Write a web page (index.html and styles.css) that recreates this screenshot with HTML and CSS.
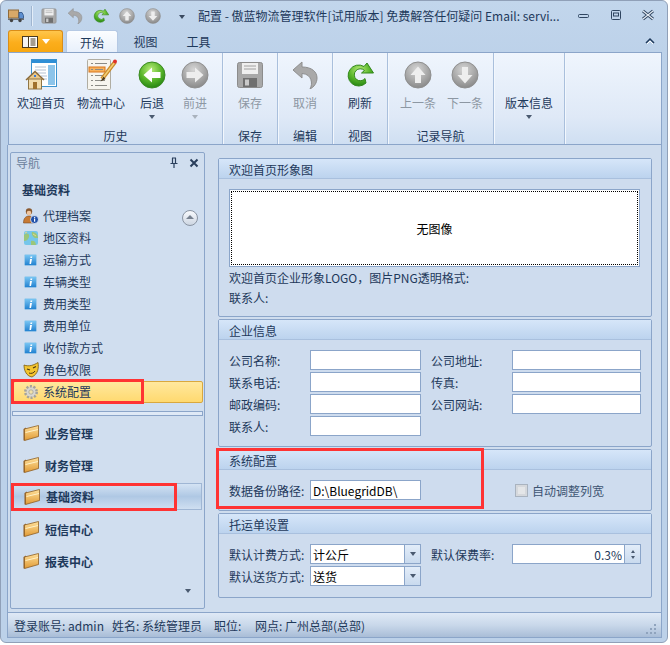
FILE: index.html
```html
<!DOCTYPE html>
<html lang="zh-CN">
<head>
  <meta charset="UTF-8" />
  <meta name="viewport" content="width=device-width, initial-scale=1.0" />
  <title>配置</title>
  <link rel="stylesheet" href="styles.css">
</head>
<body>
  <!-- 图标 -->
  <svg class="defs" aria-hidden="true">
    <defs>
      <radialGradient id="green" cx="45%" cy="30%" r="75%">
        <stop offset="0" stop-color="#b9ec7a"/><stop offset="0.55" stop-color="#58b52a"/><stop offset="1" stop-color="#1f7f10"/>
      </radialGradient>
      <radialGradient id="gray" cx="45%" cy="30%" r="75%">
        <stop offset="0" stop-color="#d6d6d6"/><stop offset="0.6" stop-color="#a6a6a6"/><stop offset="1" stop-color="#848484"/>
      </radialGradient>
      <linearGradient id="folder" x1="0" y1="0" x2="0" y2="1">
        <stop offset="0" stop-color="#ffe09a"/><stop offset="1" stop-color="#e09a35"/>
      </linearGradient>
      <linearGradient id="infoBlue" x1="0" y1="0" x2="0" y2="1">
        <stop offset="0" stop-color="#7cc8f4"/><stop offset="1" stop-color="#1f80d0"/>
      </linearGradient>
      <symbol id="i-home" viewBox="0 0 32 32">
        <rect x="6.500" y="0.500" width="25" height="27" fill="#fff" stroke="#3b93cf"/>
        <rect x="7" y="1" width="24" height="3" fill="#2f8fd6"/>
        <rect x="23" y="6" width="7" height="20" fill="#8cc4ea"/>
        <path d="M10 8h11M10 11h11M10 14h11M22 17h-6M22 20h-4" stroke="#b4c2d2" stroke-width="1.200"/>
        <path d="M1 21L10 12.500L19 21" fill="#e8c88a" stroke="#8a6a3a" stroke-width="1.500"/>
        <rect x="3.500" y="20" width="13" height="10" fill="#f2dcae" stroke="#8f7545"/>
        <rect x="8" y="23" width="4" height="7" fill="#a0702c"/>
        <rect x="9" y="16" width="2" height="2" fill="#3a7bd5"/>
      </symbol>
      <symbol id="i-center" viewBox="0 0 32 32">
        <rect x="2.500" y="0.500" width="23" height="30" rx="1" fill="#f7f5ee" stroke="#b0ada2"/>
        <rect x="4" y="8" width="16" height="5" fill="#f7b15b" stroke="#d9761c"/>
        <path d="M6 4.500h2M10 4.500h12M6 10.500h2M10 10.500h8M6 16.500h2M10 16.500h12M6 21.500h2M10 21.500h10M6 26.500h2M10 26.500h12" stroke="#8b8b85" stroke-width="1.200"/>
        <path d="M30 3L17 20" stroke="#c98a2a" stroke-width="4"/>
        <path d="M30 3L17 20" stroke="#f5cf75" stroke-width="1.500"/>
        <path d="M18.500 17.500L15.500 22.500L20.500 20Z" fill="#4a3a20"/>
        <circle cx="30" cy="2.500" r="2" fill="#e0312a"/>
      </symbol>
      <symbol id="i-back-green" viewBox="0 0 28 28">
        <circle cx="14" cy="14" r="13" fill="url(#green)" stroke="#3b8a22"/>
        <path d="M5.500 14L14 6.500V11H22.500V17H14V21.500Z" fill="#fff"/>
      </symbol>
      <symbol id="i-fwd-gray" viewBox="0 0 28 28">
        <circle cx="14" cy="14" r="13" fill="url(#gray)" stroke="#8f8f8f"/>
        <path d="M22.500 14L14 6.500V11H5.500V17H14V21.500Z" fill="#eee"/>
      </symbol>
      <symbol id="i-up-gray" viewBox="0 0 28 28">
        <circle cx="14" cy="14" r="13" fill="url(#gray)" stroke="#8f8f8f"/>
        <path d="M14 5.500L21.500 14H17V22H11V14H6.500Z" fill="#eee"/>
      </symbol>
      <symbol id="i-down-gray" viewBox="0 0 28 28">
        <circle cx="14" cy="14" r="13" fill="url(#gray)" stroke="#8f8f8f"/>
        <path d="M14 22.500L21.500 14H17V6H11V14H6.500Z" fill="#eee"/>
      </symbol>
      <symbol id="i-save" viewBox="0 0 28 28">
        <rect x="1.500" y="1.500" width="25" height="25" rx="2" fill="#a8a8a8" stroke="#8c8c8c"/>
        <rect x="6" y="2" width="16" height="11" fill="#efefef"/>
        <path d="M8 5h12M8 8h12" stroke="#a0a0a0"/>
        <rect x="7" y="17" width="14" height="9" fill="#6f6f6f"/>
        <rect x="9" y="18.500" width="4" height="6" fill="#c9c9c9"/>
      </symbol>
      <symbol id="i-undo" viewBox="0 0 26 28">
        <path d="M1 9L10 1V6C20 6 25 11 25 17C25 22 22 26 18 28C21 23 20 13 10 12.500V17Z" fill="#a9a9a9" stroke="#8e8e8e"/>
      </symbol>
      <symbol id="i-refresh" viewBox="0 0 28 28">
        <path d="M20 22A10.500 10.500 0 1 1 18 5.500L21 2L27.500 12H15.500L18.500 9.500A6 6 0 1 0 19 17.500Z" fill="url(#green)" stroke="#33881d"/>
      </symbol>
      <symbol id="i-truck" viewBox="0 0 16 14">
        <rect x="0.500" y="1.500" width="10" height="8" fill="#d8a868" stroke="#8f6a3a"/>
        <path d="M11 4h3l1.500 3v3H11Z" fill="#5d8fd0" stroke="#3d6294"/>
        <rect x="0" y="10" width="16" height="1.500" fill="#6f6f6f"/>
        <circle cx="3.500" cy="12" r="1.700" fill="#444"/><circle cx="12" cy="12" r="1.700" fill="#444"/>
      </symbol>
      <symbol id="i-agent" viewBox="0 0 16 16">
        <circle cx="6" cy="3.500" r="3.200" fill="#8a5a30"/>
        <circle cx="6" cy="5" r="2.300" fill="#f0c6a0"/>
        <path d="M0.500 15C0.500 10 3 8 6 8S11.500 10 11.500 15Z" fill="#c77a34" stroke="#7a4a22" stroke-width="0.600"/>
        <circle cx="11.500" cy="11.500" r="4" fill="#1f4fa8" stroke="#fff" stroke-width="0.700"/>
        <rect x="11" y="10.500" width="1.200" height="3.200" fill="#fff"/><rect x="11" y="8.800" width="1.200" height="1.100" fill="#fff"/>
      </symbol>
      <symbol id="i-map" viewBox="0 0 16 16">
        <rect x="1" y="1" width="14" height="14" rx="2" fill="#76c6ea"/>
        <path d="M1 5C4 2 7 4 6 7S3 11 1 11ZM9 2C12 2 15 4 15 8L12 8C10 7 8 4 9 2ZM8 11C10 10 13 11 13 15H8Z" fill="#9bc67a"/>
        <path d="M2 3l2-1M10 4l3 2" stroke="#e8d98a"/>
      </symbol>
      <symbol id="i-info" viewBox="0 0 16 16">
        <rect x="1.500" y="2.500" width="12" height="11" rx="1" fill="url(#infoBlue)" stroke="#a9cfe9" stroke-width="0.600"/>
        <path d="M7 7h2L8 12H6.500ZM7.500 4.500h1.800L9 6H7.300Z" fill="#fff"/>
      </symbol>
      <symbol id="i-mask" viewBox="0 0 16 16">
        <path d="M1 3C6 5 11 3 15 0.500C16 6 15 12 9 15C3 14 1 8 1 3Z" fill="#f3c52f" stroke="#7a5a12" stroke-width="0.800"/>
        <path d="M4 7l3 1M10 6l3-1.500" stroke="#4a3510" stroke-width="1.200"/>
        <path d="M6 11C8 12 11 11 12 9" stroke="#4a3510" fill="none"/>
      </symbol>
      <symbol id="i-gear" viewBox="0 0 16 16">
        <circle cx="8" cy="8" r="5.500" fill="#d5d3cc" stroke="#a5a39b" stroke-width="3" stroke-dasharray="2 1.450"/>
        <circle cx="8" cy="8" r="4.500" fill="#d9d7d0"/>
        <circle cx="8" cy="8" r="2.200" fill="#f2e2a8" stroke="#a5a39b" stroke-width="0.800"/>
      </symbol>
      <symbol id="i-folder" viewBox="0 0 16 16">
        <path d="M0.500 4V15.500L3 15V2.500Z" fill="#8f5a22"/>
        <path d="M1.500 4L15.500 0.500V11.500L1.500 15.500Z" fill="url(#folder)" stroke="#8f5f24" stroke-width="0.800"/>
        <path d="M2.500 7.500L15 4.500" stroke="#fff2c8" stroke-width="1"/>
      </symbol>
    </defs>
  </svg>

  <div class="window">
    <!-- 标题栏 -->
    <div class="titlebar">
      <svg class="qat-truck"><use href="#i-truck"/></svg>
      <span class="qat-sep"></span>
      <svg class="qat-icon"><use href="#i-save"/></svg>
      <svg class="qat-icon"><use href="#i-undo"/></svg>
      <svg class="qat-icon"><use href="#i-refresh"/></svg>
      <svg class="qat-icon"><use href="#i-up-gray"/></svg>
      <svg class="qat-icon"><use href="#i-down-gray"/></svg>
      <span class="qat-more"></span>
      <span class="title-text">配置 - 傲蓝物流管理软件[试用版本] 免费解答任何疑问 Email: servi...</span>
      <div class="win-buttons">
        <svg width="14" height="10" viewBox="0 0 14 10"><rect x="1.500" y="4.500" width="10" height="3" rx="1" fill="none" stroke="#2f4560"/></svg>
        <svg width="12" height="12" viewBox="0 0 12 12"><rect x="1.500" y="1.500" width="9" height="9" rx="1" fill="none" stroke="#2f4560"/><rect x="3.500" y="4" width="5" height="3" fill="none" stroke="#2f4560"/></svg>
        <svg width="14" height="12" viewBox="0 0 14 12"><path d="M2 2L12 10M12 2L2 10" stroke="#2f4560" stroke-width="3"/><path d="M2 2L12 10M12 2L2 10" stroke="#e8eef6" stroke-width="1.200"/></svg>
      </div>
    </div>

    <!-- 选项卡 -->
    <div class="tabs">
      <div class="app-button">
        <svg width="16" height="12" viewBox="0 0 16 12"><rect x="0.500" y="0.500" width="15" height="11" fill="#fff" stroke="#4a3a20"/><rect x="1" y="1" width="5" height="10" fill="#f4f4f4"/><path d="M6.500 1v10M8.500 3h5M8.500 5h5M8.500 7h5M8.500 9h5" stroke="#4a3a20"/></svg>
        <span class="app-caret"></span>
      </div>
      <div class="tab tab-active">开始</div>
      <div class="tab">视图</div>
      <div class="tab">工具</div>
      <svg class="ribbon-collapse" width="10" height="8" viewBox="0 0 10 8"><path d="M1 6L5 2L9 6" fill="none" stroke="#1e395b" stroke-width="1.500"/><path d="M2 7L5 4L8 7" fill="none" stroke="#fff"/></svg>
    </div>

    <!-- 功能区 -->
    <div class="ribbon">
      <div class="rgroup rgroup-history">
        <div class="rgroup-items">
          <div class="rbtn w58"><svg class="rbtn-icon"><use href="#i-home"/></svg><span>欢迎首页</span></div>
          <div class="rbtn w62"><svg class="rbtn-icon"><use href="#i-center"/></svg><span>物流中心</span></div>
          <div class="rbtn w40"><svg class="rbtn-icon icon-28"><use href="#i-back-green"/></svg><span>后退</span><i class="drop"></i></div>
          <div class="rbtn w46 disabled"><svg class="rbtn-icon icon-28"><use href="#i-fwd-gray"/></svg><span>前进</span><i class="drop"></i></div>
        </div>
        <div class="rgroup-label">历史</div>
      </div>
      <div class="rgroup rgroup-s">
        <div class="rgroup-items">
          <div class="rbtn disabled"><svg class="rbtn-icon icon-28"><use href="#i-save"/></svg><span>保存</span></div>
        </div>
        <div class="rgroup-label">保存</div>
      </div>
      <div class="rgroup rgroup-s">
        <div class="rgroup-items">
          <div class="rbtn disabled"><svg class="rbtn-icon icon-28"><use href="#i-undo"/></svg><span>取消</span></div>
        </div>
        <div class="rgroup-label">编辑</div>
      </div>
      <div class="rgroup rgroup-s">
        <div class="rgroup-items">
          <div class="rbtn"><svg class="rbtn-icon icon-28"><use href="#i-refresh"/></svg><span>刷新</span></div>
        </div>
        <div class="rgroup-label">视图</div>
      </div>
      <div class="rgroup rgroup-nav">
        <div class="rgroup-items">
          <div class="rbtn w48 disabled"><svg class="rbtn-icon icon-28"><use href="#i-up-gray"/></svg><span>上一条</span></div>
          <div class="rbtn w46 disabled"><svg class="rbtn-icon icon-28"><use href="#i-down-gray"/></svg><span>下一条</span></div>
        </div>
        <div class="rgroup-label">记录导航</div>
      </div>
      <div class="rgroup rgroup-ver">
        <div class="rgroup-items">
          <div class="rbtn rbtn-text"><span>版本信息</span><i class="drop"></i></div>
        </div>
        <div class="rgroup-label"></div>
      </div>
    </div>

    <div class="main">
      <!-- 导航 -->
      <div class="nav">
        <div class="nav-head">
          <span>导航</span>
          <svg width="10" height="11" viewBox="0 0 10 11"><path d="M3 1h4M3.500 1v5M6.500 1v5M1.500 6.500h7M5 7v4" stroke="#2a3f5c" stroke-width="1.200" fill="none"/></svg>
          <svg width="10" height="10" viewBox="0 0 10 10"><path d="M1.500 1.500L8.500 8.500M8.500 1.500L1.500 8.500" stroke="#2a3f5c" stroke-width="2"/></svg>
        </div>
        <div class="nav-title">基础资料</div>
        <div class="nav-items">
          <div class="nav-item"><svg><use href="#i-agent"/></svg>代理档案</div>
          <div class="nav-item"><svg><use href="#i-map"/></svg>地区资料</div>
          <div class="nav-item"><svg><use href="#i-info"/></svg>运输方式</div>
          <div class="nav-item"><svg><use href="#i-info"/></svg>车辆类型</div>
          <div class="nav-item"><svg><use href="#i-info"/></svg>费用类型</div>
          <div class="nav-item"><svg><use href="#i-info"/></svg>费用单位</div>
          <div class="nav-item"><svg><use href="#i-info"/></svg>收付款方式</div>
          <div class="nav-item"><svg><use href="#i-mask"/></svg>角色权限</div>
          <div class="nav-item nav-item-active"><svg><use href="#i-gear"/></svg>系统配置</div>
          <span class="nav-scroll"></span>
        </div>
        <div class="nav-split"></div>
        <div class="nav-groups">
          <div class="nav-group"><svg><use href="#i-folder"/></svg>业务管理</div>
          <div class="nav-group"><svg><use href="#i-folder"/></svg>财务管理</div>
          <div class="nav-group nav-group-active"><svg><use href="#i-folder"/></svg>基础资料</div>
          <div class="nav-group"><svg><use href="#i-folder"/></svg>短信中心</div>
          <div class="nav-group"><svg><use href="#i-folder"/></svg>报表中心</div>
        </div>
        <i class="drop nav-more"></i>
      </div>

      <!-- 表单 -->
      <div class="content">
        <div class="group">
          <div class="group-head">欢迎首页形象图</div>
          <div class="group-body group-body-logo">
            <div class="logo-box"><div class="logo-inner">无图像</div></div>
            <div class="logo-line">欢迎首页企业形象LOGO，图片PNG透明格式:</div>
            <div class="logo-line">联系人:</div>
          </div>
        </div>

        <div class="group">
          <div class="group-head">企业信息</div>
          <div class="group-body form">
            <label>公司名称:</label><input type="text"><span></span><label>公司地址:</label><input type="text">
            <label>联系电话:</label><input type="text"><span></span><label>传真:</label><input type="text">
            <label>邮政编码:</label><input type="text"><span></span><label>公司网站:</label><input type="text">
            <label>联系人:</label><input type="text">
          </div>
        </div>

        <div class="group">
          <div class="group-head">系统配置</div>
          <div class="group-body form">
            <label>数据备份路径:</label><input type="text" value="D:\BluegridDB\"><span></span>
            <div class="check"><span class="check-box"></span>自动调整列宽</div>
          </div>
        </div>

        <div class="group">
          <div class="group-head">托运单设置</div>
          <div class="group-body form form-last">
            <label>默认计费方式:</label>
            <div class="combo"><input type="text" value="计公斤"><span class="combo-btn"><i class="drop"></i></span></div>
            <span></span>
            <label>默认保费率:</label>
            <div class="combo"><input class="num" type="text" value="0.3%"><span class="spin-btn"><i class="spin-up"></i><i class="spin-down"></i></span></div>
            <label>默认送货方式:</label>
            <div class="combo"><input type="text" value="送货"><span class="combo-btn"><i class="drop"></i></span></div>
          </div>
        </div>
      </div>
    </div>

    <!-- 状态栏 -->
    <div class="status">
      <span class="st-user">登录账号: admin</span>
      <span class="st-name">姓名: 系统管理员</span>
      <span class="st-job">职位:</span>
      <span>网点: 广州总部(总部)</span>
      <svg class="grip" width="12" height="12" viewBox="0 0 12 12"><path d="M9 2h2v2H9zM5 6h2v2H5zM9 6h2v2H9zM1 10h2v2H1zM5 10h2v2H5zM9 10h2v2H9z" fill="#8fa3bd"/></svg>
    </div>

    <!-- 红色标注框 -->
    <div class="mark mark-item"></div>
    <div class="mark mark-group"></div>
    <div class="mark mark-form"></div>
  </div>
</body>
</html>
```

FILE: styles.css
```css
body {
  margin: 0;
  background: #fff;
  font-family: "Noto Sans CJK SC", "Noto Sans", sans-serif;
  font-size: 12px;
  color: #1e395b;
}
.defs {
  position: absolute;
  width: 0;
  height: 0;
}
.window {
  position: relative;
  box-sizing: border-box;
  width: 668px;
  height: 643px;
  display: flex;
  flex-direction: column;
  align-items: flex-start;
  background: linear-gradient(#c2d6ec, #bcd1e9 60px);
  border: 1px solid #90a0b8;
  border-radius: 6px;
}

/* 标题栏 */
.titlebar {
  display: flex;
  align-items: center;
  width: 100%;
  height: 29px;
  flex: none;
}
.qat-truck {
  width: 16px;
  height: 15px;
  margin-left: 7px;
}
.qat-sep {
  width: 2px;
  height: 20px;
  margin: 0 8px 0 7px;
  background: #e3edf8;
  border-left: 1px solid #9fb5d0;
  box-sizing: border-box;
}
.qat-icon {
  width: 16px;
  height: 16px;
  margin-right: 10px;
}
.qat-more {
  width: 0;
  height: 0;
  margin: 2px 0 0 8px;
  border: 3.5px solid transparent;
  border-top: 4px solid #3a4a60;
  border-bottom: 0;
}
.title-text {
  margin-left: 13px;
  font-size: 12px;
  line-height: 20px;
  white-space: nowrap;
}
.win-buttons {
  position: absolute;
  top: 8px;
  left: 576px;
  width: 78px;
  display: flex;
  justify-content: space-between;
  align-items: center;
}

/* 选项卡 */
.tabs {
  position: relative;
  display: flex;
  align-items: flex-end;
  width: 100%;
  height: 22px;
  flex: none;
}
.app-button {
  box-sizing: border-box;
  width: 55px;
  height: 22px;
  margin-left: 7px;
  display: flex;
  align-items: center;
  justify-content: center;
  gap: 4px;
  background: linear-gradient(#ffc64c, #fcae1c 55%, #f7a711);
  border: 1px solid #d98d18;
  border-bottom: 0;
  border-radius: 3px 3px 0 0;
}
.app-caret {
  width: 0;
  height: 0;
  border: 4px solid transparent;
  border-top: 5px solid #fff;
  border-bottom: 0;
}
.tab {
  width: 53px;
  height: 22px;
  line-height: 24px;
  text-align: center;
  color: #1e395b;
}
.tab-active {
  box-sizing: border-box;
  width: 52px;
  margin-left: 3px;
  margin-right: 1px;
  background: linear-gradient(#fbfdff, #e8f0fb);
  border: 1px solid #b5c9e4;
  border-bottom: 0;
  border-radius: 3px 3px 0 0;
}
.ribbon-collapse {
  position: absolute;
  top: 7px;
  left: 644px;
}

/* 功能区 */
.ribbon {
  box-sizing: border-box;
  display: flex;
  width: 654px;
  height: 93px;
  flex: none;
  margin-left: 7px;
  background: linear-gradient(#eff5fd, #dfe9f7 70%, #cfdff2);
  border: 1px solid #8ba5c9;
}
.rgroup {
  box-sizing: border-box;
  display: flex;
  flex-direction: column;
  border-right: 1px solid #a9bfdc;
  box-shadow: 1px 0 0 #f2f7fd;
}
.rgroup-history { width: 214px; padding-left: 3px; }
.rgroup-s { width: 55px; }
.rgroup-nav { width: 106px; padding-left: 6px; }
.rgroup-ver { width: 71px; }
.rgroup-items {
  flex: 1;
  display: flex;
  align-items: flex-start;
}
.rgroup-label {
  height: 18px;
  line-height: 20px;
  text-align: center;
  margin-left: -3px;
}
.rgroup-s .rgroup-label { margin-left: 0; }
.rgroup-nav .rgroup-label { margin-left: -6px; }
.rbtn {
  flex: 1;
  display: flex;
  flex-direction: column;
  align-items: center;
  padding-top: 6px;
}
.w58 { flex: none; width: 58px; }
.w62 { flex: none; width: 62px; }
.w40 { flex: none; width: 40px; }
.w46 { flex: none; width: 46px; }
.w48 { flex: none; width: 48px; }
.rbtn-icon {
  width: 32px;
  height: 32px;
}
.icon-28 {
  width: 28px;
  height: 28px;
  margin: 2px;
}
.rbtn span {
  margin-top: 3px;
  height: 18px;
  line-height: 18px;
  white-space: nowrap;
}
.rbtn-text { padding-top: 38px; }
.disabled { color: #8d97a3; }
.drop {
  display: block;
  width: 0;
  height: 0;
  margin-top: 3px;
  border: 3.5px solid transparent;
  border-top: 4px solid #4a5a70;
  border-bottom: 0;
}
.disabled .drop { border-top-color: #a9b2bd; }

/* 主区域 */
.main {
  box-sizing: border-box;
  display: flex;
  width: 655px;
  height: 467px;
  flex: none;
  margin-left: 6px;
  padding-left: 2px;
  background: #cfddee;
  border-left: 1px solid #8ba5c9;
  border-right: 1px solid #8ba5c9;
}

/* 导航 */
.nav {
  position: relative;
  box-sizing: border-box;
  width: 195px;
  height: 457px;
  margin-top: 7px;
  flex: none;
  background: #d0deef;
  border: 1px solid #8ba5c9;
  border-radius: 2px;
}
.nav-head {
  display: flex;
  align-items: center;
  height: 19px;
  padding: 0 5px;
  color: #6a7f9c;
}
.nav-head span { flex: 1; }
.nav-head svg { margin-left: 10px; }
.nav-title {
  height: 33px;
  padding-left: 11px;
  line-height: 36px;
  font-weight: 700;
  font-size: 12px;
}
.nav-items {
  position: relative;
}
.nav-item {
  display: flex;
  align-items: center;
  height: 22px;
  padding-left: 11px;
  margin: 0 1px;
  line-height: 22px;
}
.nav-item svg {
  width: 16px;
  height: 16px;
  margin-right: 4px;
}
.nav-item-active {
  box-sizing: border-box;
  width: 190px;
  margin-left: 2px;
  padding-left: 9px;
  background: linear-gradient(#ffe89e, #ffd96f);
  border: 1px solid #d9a83e;
  border-radius: 2px;
}
.nav-scroll {
  position: absolute;
  top: 5px;
  left: 171px;
  box-sizing: border-box;
  width: 16px;
  height: 16px;
  background: linear-gradient(#f8fafd, #cdd6e2);
  border: 1px solid #8a94a2;
  border-radius: 50%;
}
.nav-scroll::after {
  content: "";
  position: absolute;
  top: 4px;
  left: 2.500px;
  border: 4px solid transparent;
  border-bottom: 4px solid #77818f;
  border-top: 0;
}
.nav-split {
  box-sizing: border-box;
  height: 5px;
  margin: 8px 1px 1px;
  background: #dfe9f6;
  border: 1px solid #8ba5c9;
}
.nav-group {
  box-sizing: border-box;
  display: flex;
  align-items: center;
  height: 32px;
  padding-left: 12px;
  font-weight: 700;
  font-size: 12px;
}
.nav-group svg {
  width: 16px;
  height: 16px;
  margin-right: 6px;
}
.nav-group-active {
  height: 27px;
  margin: 2px 2px 3px;
  padding-left: 10px;
  background: linear-gradient(#d4e3f4, #afc8e4 50%, #cfdff1);
  border: 1px solid #9fb6d4;
}
.nav-more {
  position: absolute;
  top: 436px;
  left: 174px;
  margin: 0;
}

/* 表单 */
.content {
  width: 434px;
  margin: 13px 0 0 13px;
  display: flex;
  flex-direction: column;
  gap: 2px;
}
.group {
  background: #cedcee;
  border: 1px solid #8ba5c9;
  border-radius: 2px;
}
.group-head {
  box-sizing: border-box;
  height: 20px;
  padding-left: 10px;
  line-height: 21px;
  background: linear-gradient(#d6e6f9, #bcd3ee);
  border-bottom: 1px solid #a9c0de;
}
.group-body-logo {
  padding: 10px 11px 8px 10px;
}
.logo-box {
  box-sizing: border-box;
  height: 78px;
  padding: 1px;
  background: #fff;
  border: 1px solid #8ba5c9;
}
.logo-inner {
  box-sizing: border-box;
  height: 100%;
  display: flex;
  align-items: center;
  justify-content: center;
  color: #000;
  border: 1px dotted #000;
}
.logo-line {
  height: 20px;
  line-height: 20px;
  white-space: nowrap;
}
.logo-box + .logo-line { margin-top: 1px; }
.form {
  display: grid;
  grid-template-columns: 81px 111px 10px 81px 129px;
  grid-auto-rows: 20px;
  row-gap: 2px;
  padding: 10px 0 10px 10px;
}
.form-last { padding-bottom: 11px; }
.form label {
  line-height: 21px;
  white-space: nowrap;
}
.form input {
  box-sizing: border-box;
  width: 100%;
  height: 20px;
  margin: 0;
  padding: 0 2px;
  font: inherit;
  color: #000;
  background: #fff;
  border: 1px solid #8ba5c9;
  outline: none;
}
.check {
  grid-column: 4 / 6;
  display: flex;
  align-items: center;
  padding-left: 84px;
  white-space: nowrap;
  color: #3d5472;
}
.check-box {
  box-sizing: border-box;
  width: 13px;
  height: 13px;
  margin-right: 4px;
  background: #e4e6e8;
  border: 1px solid #a9b3bf;
  box-shadow: inset 0 0 0 2px #d5d8dc;
}
.combo {
  box-sizing: border-box;
  display: flex;
  height: 20px;
  background: #fff;
  border: 1px solid #8ba5c9;
}
.combo input {
  flex: 1;
  min-width: 0;
  height: 18px;
  border: 0;
}
.combo input.num {
  text-align: right;
  color: #1e395b;
}
.combo-btn,
.spin-btn {
  box-sizing: border-box;
  width: 16px;
  flex: none;
  display: flex;
  flex-direction: column;
  align-items: center;
  justify-content: center;
  background: linear-gradient(#e3edf9, #c9daee);
  border-left: 1px solid #8ba5c9;
}
.combo-btn .drop { margin: 0; }
.spin-btn { gap: 3px; }
.spin-up,
.spin-down {
  width: 0;
  height: 0;
  border: 2.500px solid transparent;
}
.spin-up { border-top: 0; border-bottom: 3px solid #4a5a70; }
.spin-down { border-bottom: 0; border-top: 3px solid #4a5a70; }

/* 状态栏 */
.status {
  box-sizing: border-box;
  position: relative;
  display: flex;
  align-items: center;
  width: 655px;
  height: 26px;
  flex: none;
  margin-left: 6px;
  padding-left: 6px;
  background: linear-gradient(#dfe9f6, #c9d8ea 50%, #a9bdd7);
  border: 1px solid #8ba5c9;
  white-space: nowrap;
}
.st-user { width: 98px; }
.st-name { width: 102px; }
.st-job { width: 41px; }
.grip {
  position: absolute;
  right: 4px;
  bottom: 3px;
}

/* 标注 */
.mark {
  position: absolute;
  box-sizing: border-box;
  border: 3px solid #f33;
}
.mark-item { left: 10px; top: 378px; width: 133px; height: 25px; }
.mark-group { left: 10px; top: 482px; width: 166px; height: 28px; }
.mark-form { left: 215px; top: 447px; width: 268px; height: 61px; }
```
